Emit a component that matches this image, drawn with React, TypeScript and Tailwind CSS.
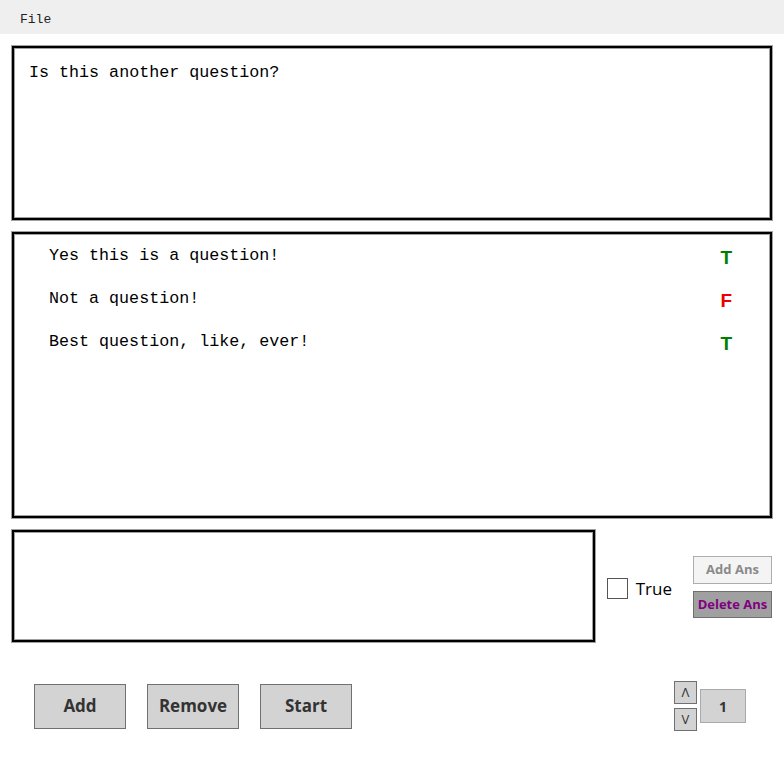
import React from "react";

const answers = [
  { text: "Yes this is a question!", correct: true },
  { text: "Not a question!", correct: false },
  { text: "Best question, like, ever!", correct: true },
];

const mono = "font-['Liberation_Mono','DejaVu_Sans_Mono',monospace]";
const sans = "font-['Open_Sans','Noto_Sans',sans-serif]";
const box = "border-2 border-black shadow-[0_0_0_1px_#a0a0a0,inset_0_0_0_1px_#a0a0a0] bg-white";

export default function App() {
  return (
    <div className={`w-[784px] h-[758px] bg-white flex flex-col ${sans}`}>
      {/* Menu bar */}
      <div className="h-[34px] bg-[#efefef] flex items-center px-[20px]">
        <span className={`${mono} text-[13px] text-[#222] mt-[5px]`}>File</span>
      </div>

      <div className="pl-[12px] pr-[12px] flex flex-col">
        {/* Question */}
        <div className={`${box} mt-[12px] h-[174px] pl-[15px] pt-[14px]`}>
          <p className={`${mono} text-[16.7px] leading-[22px] text-black`}>Is this another question?</p>
        </div>

        {/* Answers */}
        <div className={`${box} mt-[12px] h-[286px] pl-[35px] pr-[38px] pt-[3px] flex flex-col`}>
          {answers.map((a, i) => (
            <div key={i} className="flex items-center justify-between h-[43px]">
              <span className={`${mono} text-[16.7px] text-black -mt-[6px]`}>{a.text}</span>
              <span
                className={`font-['Liberation_Sans',sans-serif] font-bold text-[19px] ${
                  a.correct ? "text-[#008000]" : "text-[#ee0000]"
                }`}
              >
                {a.correct ? "T" : "F"}
              </span>
            </div>
          ))}
        </div>

        {/* New answer row */}
        <div className="mt-[12px] flex items-start">
          <div className={`${box} w-[589px] h-[112px]`} />
          <label className="ml-[12px] mt-[46px] flex items-center gap-[8px]">
            <span className="w-[21px] h-[21px] border border-[#555] bg-white" />
            <span className="text-[17px] text-black">True</span>
          </label>
          <div className="ml-[21px] mt-[26px] flex flex-col gap-[7px]">
            <button className="w-[79px] h-[28px] bg-[#f4f4f4] border border-[#adadad] text-[13px] font-bold text-[#8a8a8a]">
              Add Ans
            </button>
            <button className="w-[79px] h-[27px] bg-[#a0a0a0] border border-[#707070] text-[13px] font-bold text-[#800080]">
              Delete Ans
            </button>
          </div>
        </div>

        {/* Bottom controls */}
        <div className="mt-[39px] flex items-center">
          <div className="ml-[22px] flex gap-[21px]">
            {["Add", "Remove", "Start"].map((l) => (
              <button
                key={l}
                className="w-[92px] h-[45px] bg-[#d3d3d3] border border-[#707070] text-[17px] font-bold text-[#333]"
              >
                {l}
              </button>
            ))}
          </div>
          <div className="ml-auto mr-[26px] flex items-center gap-[3px]">
            <div className="flex flex-col gap-[4px]">
              <button className="w-[23px] h-[23px] bg-[#d3d3d3] border border-[#707070] text-[13px] text-[#333] leading-none flex items-center justify-center">
                Λ
              </button>
              <button className="w-[23px] h-[23px] bg-[#d3d3d3] border border-[#707070] text-[13px] text-[#333] leading-none flex items-center justify-center">
                V
              </button>
            </div>
            <div className="w-[46px] h-[34px] bg-[#d3d3d3] border border-[#aaaaaa] flex items-center justify-center text-[14px] font-bold text-[#333]">
              1
            </div>
          </div>
        </div>
      </div>
    </div>
  );
}
